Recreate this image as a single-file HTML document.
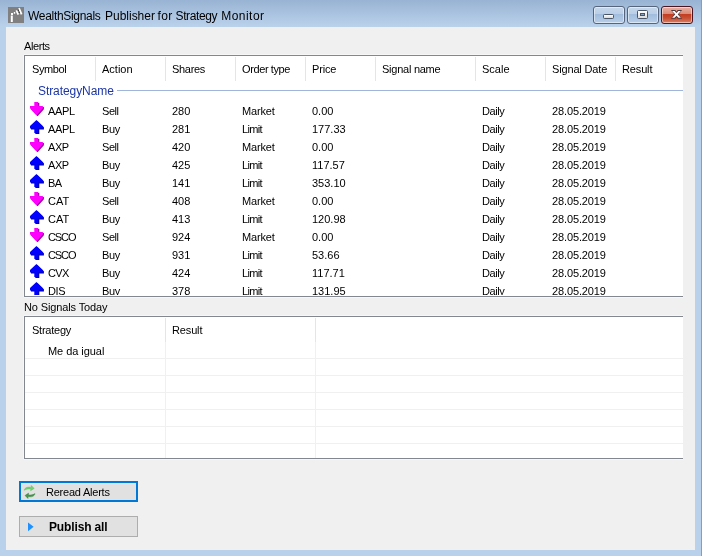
<!DOCTYPE html>
<html><head><meta charset="utf-8">
<style>
html,body{margin:0;padding:0;}
body{width:702px;height:556px;position:relative;overflow:hidden;background:#b9d1ea;font-family:"Liberation Sans",sans-serif;font-size:11px;color:#000;}
.abs{position:absolute;}
#wrap{position:absolute;left:0;top:0;width:702px;height:556px;will-change:transform;}
#title{left:0;top:0;width:702px;height:27px;background:linear-gradient(#98b3d3,#bbd2eb);}
#rightedge{left:701px;top:0;width:1px;height:556px;background:#2ec3e6;}
#content{left:6px;top:27px;width:689px;height:523px;background:#f0f0f0;}
.t{position:absolute;white-space:nowrap;line-height:13px;}
.ttl{font-size:12px;line-height:14px;}
.pub{font-size:12px;line-height:14px;font-weight:bold;}
.grp{font-size:12px;line-height:14px;color:#1c36a6;}
.lv{position:absolute;background:#fff;border:1px solid #828790;border-right:none;overflow:hidden;box-shadow:-1px 0 0 #f7f7f7,0 -1px 0 #f7f7f7,0 1px 0 #f7f7f7;}
.hd{position:absolute;top:1px;width:1px;height:24px;background:#e5e5e5;}
.btn{position:absolute;box-sizing:border-box;background:#e1e1e1;border:1px solid #adadad;}
.cb{position:absolute;top:6px;height:18px;width:32px;box-sizing:border-box;border:1px solid #56657c;border-radius:3px;box-shadow:inset 0 0 0 1px rgba(255,255,255,.5);}
.cbb{background:linear-gradient(#c6d7eb 0%,#bacee6 44%,#a1bcdc 45%,#b6cee9 100%);}
.cbr{width:32px;border-color:#4a1420;background:linear-gradient(#e9b0a2 0%,#d98a78 44%,#c23c20 45%,#c85034 70%,#dc8068 100%);}
</style></head><body><div id="wrap">
<div class="abs" id="title"></div>
<div class="abs" id="rightedge"></div>
<div class="abs" id="content"></div>
<svg class="abs" style="left:8px;top:7px" width="16" height="16" viewBox="0 0 16 16"><rect width="16" height="16" fill="#808080"/><path d="M3.8 15V8.6M3 7.1H5" stroke="#fff" stroke-width="2" fill="none"/><path d="M5.8 5.9l1.4 0M8.3 3.4l2 4.2M11 1.1l2.6 6.3" stroke="#fff" stroke-width="1.8" fill="none"/><rect x="9.8" y="2.7" width="1" height="1" fill="#000"/><rect x="10.7" y="4.7" width="1" height="1" fill="#000"/></svg>
<div class="t ttl" style="left:28px;top:9px;letter-spacing:-0.305px;">WealthSignals</div><div class="t ttl" style="left:105px;top:9px;letter-spacing:-0.01px;">Publisher</div><div class="t ttl" style="left:157.5px;top:9px;letter-spacing:0.4px;">for</div><div class="t ttl" style="left:175.5px;top:9px;letter-spacing:-0.37px;">Strategy</div><div class="t ttl" style="left:221.3px;top:9px;letter-spacing:0.45px;">Monitor</div>
<div class="cb cbb" style="left:593px"></div>
<div class="cb cbb" style="left:627px"></div>
<div class="cb cbr" style="left:661px"></div>
<!-- min glyph -->
<div class="abs" style="left:603px;top:14px;width:11px;height:5px;box-sizing:border-box;border:1px solid #4a5568;border-radius:1.5px;background:linear-gradient(#fff,#d8d8d8)"></div>
<!-- max glyph -->
<div class="abs" style="left:637px;top:10px;width:11px;height:9px;box-sizing:border-box;border:1px solid #4a5568;border-radius:1.5px;background:linear-gradient(#fff,#dcdcdc)"></div>
<div class="abs" style="left:640px;top:13px;width:5px;height:3px;box-sizing:border-box;border:1px solid #4a5568;background:#86a4c8"></div>
<!-- close glyph -->
<svg class="abs" style="left:670px;top:9px" width="14" height="11" viewBox="0 0 14 11"><path d="M0.9 0.9H5.300000000000001L12.1 9.700000000000001H7.699999999999999Z" fill="#4b3a40"/><path d="M7.699999999999999 0.9H12.1L5.300000000000001 9.700000000000001H0.9Z" fill="#4b3a40"/><path d="M2.1 1.9H4.6L10.9 8.7H8.4Z" fill="#fff"/><path d="M8.4 1.9H10.9L4.6 8.7H2.1Z" fill="#fff"/></svg>

<div class="t" style="left:24px;top:40px;letter-spacing:-0.4px;">Alerts</div>
<div class="lv" id="lv1" style="left:24px;top:55px;width:658px;height:240px">
<div class="t" style="left:7px;top:7px;letter-spacing:-0.4px;">Symbol</div>
<div class="t" style="left:77px;top:7px;">Action</div>
<div class="t" style="left:147px;top:7px;letter-spacing:-0.3px;">Shares</div>
<div class="t" style="left:217px;top:7px;letter-spacing:-0.389px;">Order type</div>
<div class="t" style="left:287px;top:7px;letter-spacing:-0.175px;">Price</div>
<div class="t" style="left:357px;top:7px;letter-spacing:-0.25px;">Signal name</div>
<div class="t" style="left:457px;top:7px;">Scale</div>
<div class="t" style="left:527px;top:7px;letter-spacing:-0.16px;">Signal Date</div>
<div class="t" style="left:597px;top:7px;letter-spacing:-0.14px;">Result</div>
<div class="hd" style="left:70px"></div>
<div class="hd" style="left:140px"></div>
<div class="hd" style="left:210px"></div>
<div class="hd" style="left:280px"></div>
<div class="hd" style="left:350px"></div>
<div class="hd" style="left:450px"></div>
<div class="hd" style="left:520px"></div>
<div class="hd" style="left:590px"></div>
<div class="t grp" style="left:13px;top:28px;letter-spacing:-0.077px;">StrategyName</div>
<div class="abs" style="left:92px;top:34px;width:600px;height:1px;background:#a0b5da"></div>
<svg class="abs" style="left:5px;top:46px" width="14" height="14" viewBox="0 0 14 14"><path d="M4.3 0H8.3V4.1H12.9V6.3L6.8 13H6.2L0 6.3V4.1H4.3Z" fill="#96009a" transform="translate(1,1)"/><path d="M4.3 0H8.3V4.1H12.9V6.3L6.8 13H6.2L0 6.3V4.1H4.3Z" fill="#ff00ff"/></svg>
<div class="t" style="left:23px;top:49px;letter-spacing:-0.333px;">AAPL</div>
<div class="t" style="left:77px;top:49px;letter-spacing:-0.433px;">Sell</div>
<div class="t" style="left:147px;top:49px;">280</div>
<div class="t" style="left:217px;top:49px;letter-spacing:-0.18px;">Market</div>
<div class="t" style="left:287px;top:49px;">0.00</div>
<div class="t" style="left:457px;top:49px;letter-spacing:-0.45px;">Daily</div>
<div class="t" style="left:527px;top:49px;letter-spacing:-0.122px;">28.05.2019</div>
<svg class="abs" style="left:5px;top:64px" width="14" height="14" viewBox="0 0 14 14"><path d="M6.4 0L12.9 6.3V8.6H8.3V13H4.3V8.6H0V6.1Z" fill="#00009a" transform="translate(1,1)"/><path d="M6.4 0L12.9 6.3V8.6H8.3V13H4.3V8.6H0V6.1Z" fill="#0000ff"/></svg>
<div class="t" style="left:23px;top:67px;letter-spacing:-0.333px;">AAPL</div>
<div class="t" style="left:77px;top:67px;letter-spacing:-0.4px;">Buy</div>
<div class="t" style="left:147px;top:67px;">281</div>
<div class="t" style="left:217px;top:67px;letter-spacing:-0.65px;">Limit</div>
<div class="t" style="left:287px;top:67px;">177.33</div>
<div class="t" style="left:457px;top:67px;letter-spacing:-0.45px;">Daily</div>
<div class="t" style="left:527px;top:67px;letter-spacing:-0.122px;">28.05.2019</div>
<svg class="abs" style="left:5px;top:82px" width="14" height="14" viewBox="0 0 14 14"><path d="M4.3 0H8.3V4.1H12.9V6.3L6.8 13H6.2L0 6.3V4.1H4.3Z" fill="#96009a" transform="translate(1,1)"/><path d="M4.3 0H8.3V4.1H12.9V6.3L6.8 13H6.2L0 6.3V4.1H4.3Z" fill="#ff00ff"/></svg>
<div class="t" style="left:23px;top:85px;letter-spacing:-0.4px;">AXP</div>
<div class="t" style="left:77px;top:85px;letter-spacing:-0.433px;">Sell</div>
<div class="t" style="left:147px;top:85px;">420</div>
<div class="t" style="left:217px;top:85px;letter-spacing:-0.18px;">Market</div>
<div class="t" style="left:287px;top:85px;">0.00</div>
<div class="t" style="left:457px;top:85px;letter-spacing:-0.45px;">Daily</div>
<div class="t" style="left:527px;top:85px;letter-spacing:-0.122px;">28.05.2019</div>
<svg class="abs" style="left:5px;top:100px" width="14" height="14" viewBox="0 0 14 14"><path d="M6.4 0L12.9 6.3V8.6H8.3V13H4.3V8.6H0V6.1Z" fill="#00009a" transform="translate(1,1)"/><path d="M6.4 0L12.9 6.3V8.6H8.3V13H4.3V8.6H0V6.1Z" fill="#0000ff"/></svg>
<div class="t" style="left:23px;top:103px;letter-spacing:-0.4px;">AXP</div>
<div class="t" style="left:77px;top:103px;letter-spacing:-0.4px;">Buy</div>
<div class="t" style="left:147px;top:103px;">425</div>
<div class="t" style="left:217px;top:103px;letter-spacing:-0.65px;">Limit</div>
<div class="t" style="left:287px;top:103px;">117.57</div>
<div class="t" style="left:457px;top:103px;letter-spacing:-0.45px;">Daily</div>
<div class="t" style="left:527px;top:103px;letter-spacing:-0.122px;">28.05.2019</div>
<svg class="abs" style="left:5px;top:118px" width="14" height="14" viewBox="0 0 14 14"><path d="M6.4 0L12.9 6.3V8.6H8.3V13H4.3V8.6H0V6.1Z" fill="#00009a" transform="translate(1,1)"/><path d="M6.4 0L12.9 6.3V8.6H8.3V13H4.3V8.6H0V6.1Z" fill="#0000ff"/></svg>
<div class="t" style="left:23px;top:121px;letter-spacing:-0.7px;">BA</div>
<div class="t" style="left:77px;top:121px;letter-spacing:-0.4px;">Buy</div>
<div class="t" style="left:147px;top:121px;">141</div>
<div class="t" style="left:217px;top:121px;letter-spacing:-0.65px;">Limit</div>
<div class="t" style="left:287px;top:121px;">353.10</div>
<div class="t" style="left:457px;top:121px;letter-spacing:-0.45px;">Daily</div>
<div class="t" style="left:527px;top:121px;letter-spacing:-0.122px;">28.05.2019</div>
<svg class="abs" style="left:5px;top:136px" width="14" height="14" viewBox="0 0 14 14"><path d="M4.3 0H8.3V4.1H12.9V6.3L6.8 13H6.2L0 6.3V4.1H4.3Z" fill="#96009a" transform="translate(1,1)"/><path d="M4.3 0H8.3V4.1H12.9V6.3L6.8 13H6.2L0 6.3V4.1H4.3Z" fill="#ff00ff"/></svg>
<div class="t" style="left:23px;top:139px;">CAT</div>
<div class="t" style="left:77px;top:139px;letter-spacing:-0.433px;">Sell</div>
<div class="t" style="left:147px;top:139px;">408</div>
<div class="t" style="left:217px;top:139px;letter-spacing:-0.18px;">Market</div>
<div class="t" style="left:287px;top:139px;">0.00</div>
<div class="t" style="left:457px;top:139px;letter-spacing:-0.45px;">Daily</div>
<div class="t" style="left:527px;top:139px;letter-spacing:-0.122px;">28.05.2019</div>
<svg class="abs" style="left:5px;top:154px" width="14" height="14" viewBox="0 0 14 14"><path d="M6.4 0L12.9 6.3V8.6H8.3V13H4.3V8.6H0V6.1Z" fill="#00009a" transform="translate(1,1)"/><path d="M6.4 0L12.9 6.3V8.6H8.3V13H4.3V8.6H0V6.1Z" fill="#0000ff"/></svg>
<div class="t" style="left:23px;top:157px;">CAT</div>
<div class="t" style="left:77px;top:157px;letter-spacing:-0.4px;">Buy</div>
<div class="t" style="left:147px;top:157px;">413</div>
<div class="t" style="left:217px;top:157px;letter-spacing:-0.65px;">Limit</div>
<div class="t" style="left:287px;top:157px;">120.98</div>
<div class="t" style="left:457px;top:157px;letter-spacing:-0.45px;">Daily</div>
<div class="t" style="left:527px;top:157px;letter-spacing:-0.122px;">28.05.2019</div>
<svg class="abs" style="left:5px;top:172px" width="14" height="14" viewBox="0 0 14 14"><path d="M4.3 0H8.3V4.1H12.9V6.3L6.8 13H6.2L0 6.3V4.1H4.3Z" fill="#96009a" transform="translate(1,1)"/><path d="M4.3 0H8.3V4.1H12.9V6.3L6.8 13H6.2L0 6.3V4.1H4.3Z" fill="#ff00ff"/></svg>
<div class="t" style="left:23px;top:175px;letter-spacing:-1.1px;">CSCO</div>
<div class="t" style="left:77px;top:175px;letter-spacing:-0.433px;">Sell</div>
<div class="t" style="left:147px;top:175px;">924</div>
<div class="t" style="left:217px;top:175px;letter-spacing:-0.18px;">Market</div>
<div class="t" style="left:287px;top:175px;">0.00</div>
<div class="t" style="left:457px;top:175px;letter-spacing:-0.45px;">Daily</div>
<div class="t" style="left:527px;top:175px;letter-spacing:-0.122px;">28.05.2019</div>
<svg class="abs" style="left:5px;top:190px" width="14" height="14" viewBox="0 0 14 14"><path d="M6.4 0L12.9 6.3V8.6H8.3V13H4.3V8.6H0V6.1Z" fill="#00009a" transform="translate(1,1)"/><path d="M6.4 0L12.9 6.3V8.6H8.3V13H4.3V8.6H0V6.1Z" fill="#0000ff"/></svg>
<div class="t" style="left:23px;top:193px;letter-spacing:-1.1px;">CSCO</div>
<div class="t" style="left:77px;top:193px;letter-spacing:-0.4px;">Buy</div>
<div class="t" style="left:147px;top:193px;">931</div>
<div class="t" style="left:217px;top:193px;letter-spacing:-0.65px;">Limit</div>
<div class="t" style="left:287px;top:193px;">53.66</div>
<div class="t" style="left:457px;top:193px;letter-spacing:-0.45px;">Daily</div>
<div class="t" style="left:527px;top:193px;letter-spacing:-0.122px;">28.05.2019</div>
<svg class="abs" style="left:5px;top:208px" width="14" height="14" viewBox="0 0 14 14"><path d="M6.4 0L12.9 6.3V8.6H8.3V13H4.3V8.6H0V6.1Z" fill="#00009a" transform="translate(1,1)"/><path d="M6.4 0L12.9 6.3V8.6H8.3V13H4.3V8.6H0V6.1Z" fill="#0000ff"/></svg>
<div class="t" style="left:23px;top:211px;letter-spacing:-0.65px;">CVX</div>
<div class="t" style="left:77px;top:211px;letter-spacing:-0.4px;">Buy</div>
<div class="t" style="left:147px;top:211px;">424</div>
<div class="t" style="left:217px;top:211px;letter-spacing:-0.65px;">Limit</div>
<div class="t" style="left:287px;top:211px;">117.71</div>
<div class="t" style="left:457px;top:211px;letter-spacing:-0.45px;">Daily</div>
<div class="t" style="left:527px;top:211px;letter-spacing:-0.122px;">28.05.2019</div>
<svg class="abs" style="left:5px;top:226px" width="14" height="14" viewBox="0 0 14 14"><path d="M6.4 0L12.9 6.3V8.6H8.3V13H4.3V8.6H0V6.1Z" fill="#00009a" transform="translate(1,1)"/><path d="M6.4 0L12.9 6.3V8.6H8.3V13H4.3V8.6H0V6.1Z" fill="#0000ff"/></svg>
<div class="t" style="left:23px;top:229px;letter-spacing:-0.4px;">DIS</div>
<div class="t" style="left:77px;top:229px;letter-spacing:-0.4px;">Buy</div>
<div class="t" style="left:147px;top:229px;">378</div>
<div class="t" style="left:217px;top:229px;letter-spacing:-0.65px;">Limit</div>
<div class="t" style="left:287px;top:229px;">131.95</div>
<div class="t" style="left:457px;top:229px;letter-spacing:-0.45px;">Daily</div>
<div class="t" style="left:527px;top:229px;letter-spacing:-0.122px;">28.05.2019</div>
<div class="abs" style="left:0;top:239px;width:700px;height:1px;background:#fff"></div>
</div>
<div class="t" style="left:24px;top:301px;letter-spacing:-0.12px;">No Signals Today</div>
<div class="lv" id="lv2" style="left:24px;top:316px;width:658px;height:141px">
<div class="t" style="left:7px;top:7px;letter-spacing:-0.229px;">Strategy</div>
<div class="t" style="left:147px;top:7px;letter-spacing:-0.14px;">Result</div>
<div class="hd" style="left:140px"></div>
<div class="abs" style="left:140px;top:25px;width:1px;height:120px;background:#f0f0f0"></div>
<div class="hd" style="left:290px"></div>
<div class="abs" style="left:290px;top:25px;width:1px;height:120px;background:#f0f0f0"></div>
<div class="t" style="left:23px;top:28px;letter-spacing:-0.05px;">Me da igual</div>
<div class="abs" style="left:0;top:41px;width:700px;height:1px;background:#f0f0f0"></div>
<div class="abs" style="left:0;top:58px;width:700px;height:1px;background:#f0f0f0"></div>
<div class="abs" style="left:0;top:75px;width:700px;height:1px;background:#f0f0f0"></div>
<div class="abs" style="left:0;top:92px;width:700px;height:1px;background:#f0f0f0"></div>
<div class="abs" style="left:0;top:109px;width:700px;height:1px;background:#f0f0f0"></div>
<div class="abs" style="left:0;top:126px;width:700px;height:1px;background:#f0f0f0"></div>
</div>

<div class="btn" style="left:19px;top:481px;width:119px;height:21px;border:2px solid #0078d7"></div>
<div class="btn" style="left:19px;top:516px;width:119px;height:21px"></div>
<svg class="abs" style="left:23px;top:484px" width="14" height="16" viewBox="0 0 14 16"><path d="M1.2 6.3C2 3.2 5 2.6 8 3.4L8.2 1.4L11.2 4.4L7.6 6.8L7.8 5.1C5.5 4.6 3.2 5 1.2 6.3Z" fill="#6fd46f" stroke="#58b858" stroke-width=".4"/><path d="M12 9.6C11.2 12.7 8.2 13.3 5.2 12.5L5 14.5L2 11.5L5.6 9.1L5.4 10.8C7.7 11.3 10 10.9 12 9.6Z" fill="#3f9a45" stroke="#2f7a38" stroke-width=".4"/></svg>
<svg class="abs" style="left:28px;top:522px" width="6" height="10" viewBox="0 0 6 10"><path d="M0 0.6L5.6 4.8L0 9.2Z" fill="#1e90ff"/></svg>
<div class="t" style="left:46px;top:486px;letter-spacing:-0.225px;">Reread Alerts</div>
<div class="t pub" style="left:49px;top:520px;letter-spacing:-0.14px;">Publish all</div>
</div></body></html>
